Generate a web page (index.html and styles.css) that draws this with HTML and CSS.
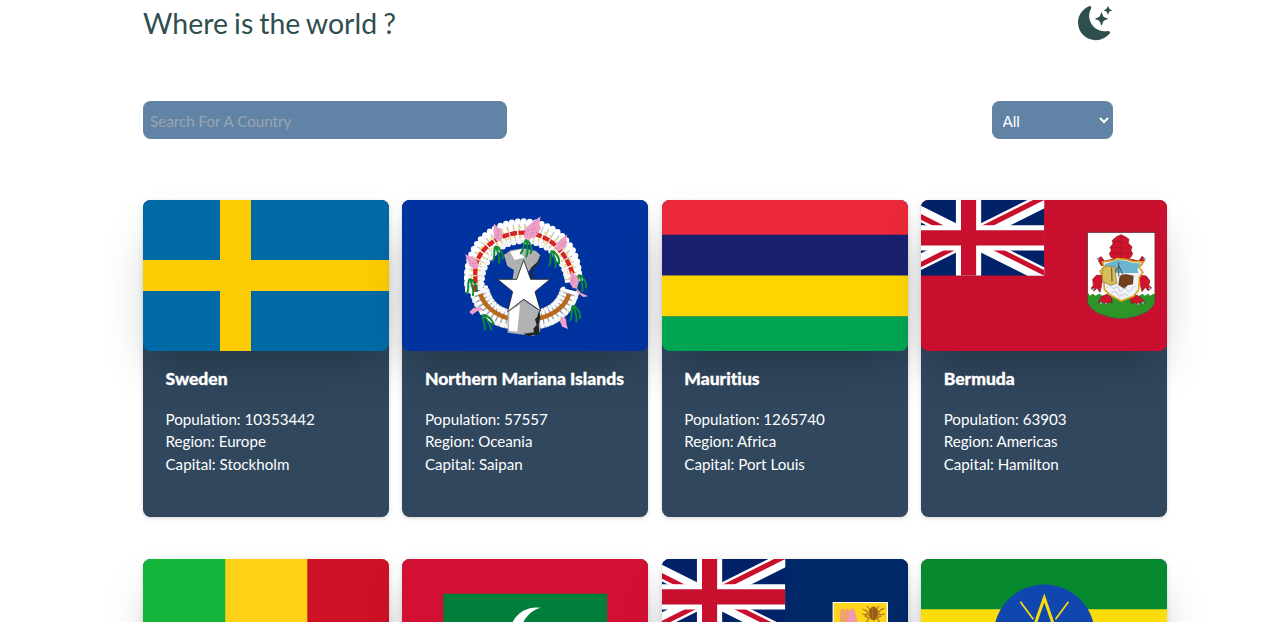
FILE: index.html
```html
<!DOCTYPE html>
<html lang="en">
<head>
<meta charset="utf-8">
<title>Where is the world ?</title>
<link rel="stylesheet" href="styles.css">
</head>
<body>
<svg class="defs" aria-hidden="true">
  <defs>
    <clipPath id="jack-diagonals"><path d="M30 15h30v15zv15H0zH0V0zV0h30z"/></clipPath>
    <g id="union-jack">
      <path d="M0 0h60v30H0z" fill="#012169"/>
      <path d="M0 0l60 30M60 0L0 30" stroke="#fff" stroke-width="6"/>
      <path d="M0 0l60 30M60 0L0 30" stroke="#c8102e" stroke-width="4" clip-path="url(#jack-diagonals)"/>
      <path d="M30 0v30M0 15h60" stroke="#fff" stroke-width="10"/>
      <path d="M30 0v30M0 15h60" stroke="#c8102e" stroke-width="6"/>
    </g>
    <clipPath id="canton"><path d="M0 0h123.3v75.7H0z"/></clipPath>
    <clipPath id="shield"><path d="M37 22H240V225C240 255 190 280 139 281C88 280 37 255 37 225Z"/></clipPath>
    <path id="orchid" d="M-4-34L4-20 12-15 14 5 5 22-6 20-13 5-10-13Z"/>
    <path id="leaves" d="M0 0C-8 14 2 28-7 42M4 0C4 18 16 24 11 48M8 2C18 14 24 20 22 36" fill="none" stroke="#0c8a34" stroke-width="6" stroke-linecap="round"/>
  </defs>
</svg>
<div class="page">
  <header class="header">
    <h1 class="title">Where is the world ?</h1>
    <svg class="moon" viewBox="0 0 16 16" fill="currentColor">
      <path d="M6 .278a.768.768 0 0 1 .08.858 7.208 7.208 0 0 0-.878 3.46c0 4.021 3.278 7.277 7.318 7.277.527 0 1.04-.055 1.533-.16a.787.787 0 0 1 .81.316.733.733 0 0 1-.031.893A8.349 8.349 0 0 1 8.344 16C3.734 16 0 12.286 0 7.71 0 4.266 2.114 1.312 5.124.06A.752.752 0 0 1 6 .278z"/>
      <path d="M10.794 3.148a.217.217 0 0 1 .412 0l.387 1.162c.173.518.579.924 1.097 1.097l1.162.387a.217.217 0 0 1 0 .412l-1.162.387a1.734 1.734 0 0 0-1.097 1.097l-.387 1.162a.217.217 0 0 1-.412 0l-.387-1.162A1.734 1.734 0 0 0 9.31 6.593l-1.162-.387a.217.217 0 0 1 0-.412l1.162-.387a1.734 1.734 0 0 0 1.097-1.097l.387-1.162zM13.863.099a.145.145 0 0 1 .274 0l.258.774c.115.346.386.617.732.732l.774.258a.145.145 0 0 1 0 .274l-.774.258a1.156 1.156 0 0 0-.732.732l-.258.774a.145.145 0 0 1-.274 0l-.258-.774a1.156 1.156 0 0 0-.732-.732l-.774-.258a.145.145 0 0 1 0-.274l.774-.258c.346-.115.617-.386.732-.732L13.863.1z"/>
    </svg>
  </header>
  <div class="filters">
    <input class="search" type="text" placeholder="Search For A Country">
    <select class="region"><option>All</option></select>
  </div>
  <main class="grid">
    <article class="card">
      <svg class="flag" viewBox="0 0 246 151.5" preserveAspectRatio="none">
        <path d="M0 0h246v152H0z" fill="#006aa7"/>
        <path d="M77 0h31v60h138v31H108v61H77V91H0V60h77z" fill="#fecc02"/>
      </svg>
      <div class="info"><h2 class="name">Sweden</h2><p>Population: 10353442</p><p>Region: Europe</p><p>Capital: Stockholm</p></div>
    </article>
    <article class="card">
      <svg class="flag" viewBox="0 0 246 151.5" preserveAspectRatio="none">
        <path d="M0 0h246v152H0z" fill="#0033a0"/>
        <g transform="translate(38) scale(.3333)" fill="none">
          <path d="M119 272C130 320 165 350 208 358M390 270C378 320 343 348 296 358" stroke="#9aa2ac" stroke-width="59"/>
          <path d="M119 272C130 320 165 350 208 358M390 270C378 320 343 348 296 358" stroke="#fff" stroke-width="56" stroke-dasharray="10 4"/>
          <path d="M94 276C110 340 150 370 204 378M412 278C396 336 350 370 298 378M138 262C148 308 176 332 208 335M370 266C358 308 328 330 300 334" stroke="#f4f5f8" stroke-width="13" stroke-linecap="round" stroke-dasharray="0 14"/>
          <path d="M103 272C84 160 165 94 250 94C325 94 390 140 402 245" stroke="#c5c8cf" stroke-width="54"/>
          <path d="M103 272C84 160 165 94 250 94C325 94 390 140 402 245" stroke="#fff" stroke-width="53" stroke-dasharray="12 4"/>
          <path d="M84 270C62 134 158 64 250 64C344 64 416 130 418 232" stroke="#fff" stroke-width="18" stroke-linecap="round" stroke-dasharray="0 18"/>
          <path d="M127 270C116 190 175 124 250 124C320 126 368 170 382 240" stroke="#f5f5f7" stroke-width="17" stroke-linecap="round" stroke-dasharray="0 17"/>
          <path d="M95 250C87 156 160 84 250 82C330 84 396 148 406 234M113 248C107 176 169 111 250 109C316 110 370 164 389 236" stroke="#f7dc55" stroke-width="6" stroke-linecap="round" stroke-dasharray="1 18"/>
          <path d="M106 275V205C114 145 178 98 250 98C318 98 374 145 398 222" stroke="#d6251f" stroke-width="13" stroke-dasharray="21 4"/>
          <path d="M121 282C133 318 165 344 206 355M387 282C378 318 343 344 298 355" stroke="#b9691c" stroke-width="14"/>
          <path d="M192 165L212 151 250 145 288 153 301 166 294 188 265 214V238H218L222 210 202 198Z" fill="#aeb0b2"/>
          <path d="M210 155L248 147 243 162 255 172 224 180Z" fill="#fff"/>
          <path d="M288 198L298 185 301 166 292 186 272 204V238L278 232V208Z" fill="#25282a"/>
          <path d="M203 334L251 299 300 334 301 395 280 408 203 398Z" fill="#b0b2b3"/>
          <path d="M208 334L240 314 232 395 207 392Z" fill="#fff"/>
          <path d="M298 328L292 350 285 358 290 375 280 386 282 397 250 401 265 409 299 402 296 375 301 352Z" fill="#202426"/>
          <path d="M251 180L272 238H330L285 275 302 333 251 298 203 335 218 275 173 238H230Z" fill="#fff" stroke="#222" stroke-width="2.5"/>
          <use href="#leaves" x="166" y="140"/><use href="#leaves" x="258" y="120" transform="rotate(12 258 120)"/><use href="#leaves" x="335" y="154"/><use href="#leaves" x="88" y="238"/><use href="#leaves" x="416" y="226"/><use href="#leaves" x="128" y="346" transform="rotate(-18 128 346)"/><use href="#leaves" x="398" y="318"/>
          <g fill="#eda0c7">
            <use href="#orchid" transform="translate(173 103) rotate(-12)"/>
            <use href="#orchid" transform="translate(276 91) rotate(38) scale(1.45)"/>
            <use href="#orchid" transform="translate(98 188) rotate(-35)"/>
            <use href="#orchid" transform="translate(364 133) rotate(36)"/>
            <use href="#orchid" transform="translate(402 244) rotate(-8)"/>
            <path d="M408 262L422 278 445 289 430 291 413 278ZM88 336L101 323 122 322 132 330 112 333 97 344ZM363 348L378 357 380 374 384 387 367 380 360 365Z"/>
          </g>
          <g stroke="#c5558e" stroke-width="2.5" stroke-dasharray="2 5">
            <path d="M169 80L178 120M179 88L168 120M258 94L292 84M262 103L292 97M285 63L273 110M84 173L108 204M91 190L112 190M354 145L380 119M347 125L374 139M400 220L397 260M410 230L393 242"/>
          </g>
        </g>
      </svg>
      <div class="info"><h2 class="name">Northern Mariana Islands</h2><p>Population: 57557</p><p>Region: Oceania</p><p>Capital: Saipan</p></div>
    </article>
    <article class="card">
      <svg class="flag" viewBox="0 0 246 151.5" preserveAspectRatio="none">
        <path d="M0 0h246v35H0z" fill="#ea2839"/>
        <path d="M0 34.7h246v41H0z" fill="#1a206d"/>
        <path d="M0 75.6h246v41H0z" fill="#ffd500"/>
        <path d="M0 116.4h246V152H0z" fill="#00a551"/>
      </svg>
      <div class="info"><h2 class="name">Mauritius</h2><p>Population: 1265740</p><p>Region: Africa</p><p>Capital: Port Louis</p></div>
    </article>
    <article class="card">
      <svg class="flag" viewBox="0 0 246 151.5" preserveAspectRatio="none">
        <path d="M0 0h246v152H0z" fill="#c8102e"/>
        <g clip-path="url(#canton)"><use href="#union-jack" transform="translate(-28.2) scale(2.525)"/></g>
        <g transform="translate(154 25) scale(.3333)">
          <g clip-path="url(#shield)">
            <path d="M37 22H240V285H37Z" fill="#fff"/>
            <path d="M30 210L40 205 45 212 53 206 62 212 72 206 83 212H193L202 206 210 212 219 206 226 212 235 206 245 212V285H30Z" fill="#2d9427"/>
          </g>
          <path d="M37 22H240V225C240 255 190 280 139 281C88 280 37 255 37 225Z" fill="none" stroke="#5b3438" stroke-width="2.5"/>
          <g fill="#cf142b" stroke="#831825" stroke-width="2">
            <path d="M125 35L138 29 151 35 162 43 160 55 171 65 168 76 173 86 168 96 155 104H123L108 97 103 86 109 76 105 67 114 57 112 46Z"/>
            <path d="M120 101L88 108 79 95 67 101 79 122 112 119ZM160 101L192 108 201 94 211 102 199 122 166 119Z"/>
            <path d="M84 150L64 151 53 163 55 181 48 190 57 198 66 189 75 202 80 180ZM194 150L214 153 225 168 221 180 230 189 219 197 211 187 201 200 196 179Z"/>
            <path d="M97 207L79 215 70 234 82 230 93 240 101 231 112 234 108 215ZM178 207L199 218 210 233 198 230 190 240 181 232 170 236 165 216Z"/>
          </g>
          <path d="M120 48L156 52M112 66L163 70M112 84L166 86M138 34V100" stroke="#831825" stroke-width="3" stroke-dasharray="4 5" fill="none"/>
          <path d="M82 111L112 107 126 101 153 103 171 109 205 111 192 126 204 142 193 157 191 195 175 214 139 228 107 211 88 194 86 157 75 139 88 126Z" fill="#eef1f8" stroke="#d9a520" stroke-width="5"/>
          <path d="M90 117L112 110 126 105 153 107 171 114 196 115 187 134 190 144H92L82 139 92 130Z" fill="#69b5cf"/>
          <path d="M82 130L98 122 120 127 125 175 108 181 82 169Z" fill="#d8bd55" stroke="#8a7430" stroke-width="2"/>
          <path d="M134 152L151 147 176 152 174 178 158 181 148 191 130 180Z" fill="#70401f"/>
          <path d="M131 112V154M120 141L132 123 144 151M110 128L111 170" stroke="#48514f" stroke-width="3" fill="none"/>
          <path d="M94 190L105 181 116 192 127 185 136 201 149 188 160 200 180 183M109 203L123 199 132 214 149 207 160 214" stroke="#b5b9c6" stroke-width="2" fill="none"/>
          <g fill="#86bddb"><circle cx="70" cy="103" r="3"/><circle cx="208" cy="103" r="3"/><circle cx="55" cy="192" r="3"/><circle cx="224" cy="190" r="3"/><circle cx="78" cy="234" r="3"/><circle cx="93" cy="236" r="3"/><circle cx="190" cy="237" r="3"/><circle cx="204" cy="233" r="3"/></g>
        </g>
      </svg>
      <div class="info"><h2 class="name">Bermuda</h2><p>Population: 63903</p><p>Region: Americas</p><p>Capital: Hamilton</p></div>
    </article>
    <article class="card">
      <svg class="flag" viewBox="0 0 246 151.5" preserveAspectRatio="none">
        <path d="M0 0h246v152H0z" fill="#14b53a"/><path d="M82.3 0H246v152H82.3z" fill="#fcd116"/><path d="M164.3 0H246v152h-81.7z" fill="#ce1126"/>
      </svg>
    </article>
    <article class="card">
      <svg class="flag" viewBox="0 0 246 151.5" preserveAspectRatio="none">
        <path d="M0 0h246v152H0z" fill="#d21034"/><path d="M41.3 34.7h164v82h-164z" fill="#007e3a"/>
        <path d="M138.5 48.8A27 27 0 1 0 138.5 102.2A27.8 27.8 0 0 1 138.5 48.8Z" fill="#fff"/>
      </svg>
    </article>
    <article class="card">
      <svg class="flag" viewBox="0 0 246 151.5" preserveAspectRatio="none">
        <path d="M0 0h246v152H0z" fill="#002868"/>
        <g clip-path="url(#canton)"><use href="#union-jack" transform="translate(-28.2) scale(2.525)"/></g>
        <path d="M171.2 43.5h54.2v40c0 12-14 20-27.1 25-13-5-27.1-13-27.1-25z" fill="#ffd41c" stroke="#fff" stroke-width="1.2"/>
        <path d="M178.5 64l-.8-9 1.5-5.5 3.5 1.5 3-1.5 2 3 2-4 3 2.5 1.5 6 1.5 7z" fill="#f4a06c"/>
        <path d="M185 64l2-10 2-4 3 2 1.5 6 2 6z" fill="#f29ab5"/>
        <path d="M201 50l5 3-3 4 4 2-3 5M222 49l-6 4 3 4-4 2 3 5M200 55l7 1M223 55l-7 1M205 47l3 4M217 47l-3 4" fill="none" stroke="#a9771b" stroke-width="1.2"/>
        <ellipse cx="211.5" cy="54.5" rx="5" ry="7" fill="#b1731d"/><path d="M209 50v9M212 48v13M214 50v8" stroke="#6e3c12" stroke-width=".8"/>
      </svg>
    </article>
    <article class="card">
      <svg class="flag" viewBox="0 0 246 151.5" preserveAspectRatio="none">
        <path d="M0 0h246v51H0z" fill="#078930"/><path d="M0 50.3h246v51H0z" fill="#fcdd09"/><path d="M0 101h246v51H0z" fill="#da121a"/>
        <circle cx="123.3" cy="76" r="50.6" fill="#0f47af"/>
        <g fill="none" stroke="#fcdd09" stroke-width="3"><path d="M123.3 39L99 108 158 66H88L147 108Z"/><path stroke-width="1.7" d="M99.3 42.8L112.3 60.3M147.5 42.8L134.5 60.3"/></g>
      </svg>
    </article>
  </main>
</div>
</body>
</html>
```
FILE: styles.css
```css
* { box-sizing: border-box; margin: 0; padding: 0; }
body {
  background: #fff;
  font-family: Lato, sans-serif;
  font-size: 15.17px;
  line-height: 22.75px;
  font-variant-ligatures: none;
}
.defs { position: absolute; width: 0; height: 0; }
.page { height: 622px; padding-left: 143px; overflow: hidden; }
.header {
  display: flex;
  justify-content: space-between;
  align-items: center;
  width: 969.5px;
  height: 47px;
  color: #2f4f4f;
}
.title { font-size: 28.44px; font-weight: 400; line-height: 45px; word-spacing: -1.2px; }
.moon { display: block; width: 34.2px; height: 34.2px; }
.filters {
  display: flex;
  justify-content: space-between;
  width: 969.5px;
  margin-top: 54.3px;
}
.search, .region {
  height: 38px;
  border: 0;
  border-radius: 7.6px;
  background: #6184a6;
  color: #fff;
  font: inherit;
  outline: 0;
}
.search { width: 364px; padding: 1px 7px 0; }
.search::placeholder { color: #9ca3af; opacity: 1; }
.region { width: 121px; padding: 1px 0 0 7px; border-right: 1px solid transparent; }
.grid {
  display: grid;
  grid-template-columns: repeat(4, 246px);
  column-gap: 13.4px;
  row-gap: 41.7px;
  margin-top: 60.4px;
}
.card {
  height: 317.8px;
  border-radius: 7.6px;
  background: #30475e;
  color: #fff;
  box-shadow: 0 1px 3px rgba(0, 0, 0, .1), 0 2px 6px rgba(0, 0, 0, .07);
}
.flag {
  display: block;
  width: 100%;
  height: 151.5px;
  border-radius: 7.6px;
  box-shadow: 0 23.7px 47.4px -11.4px rgba(0, 0, 0, .25);
}
.info { padding: 14.6px 22.5px; }
.name {
  margin-bottom: 15.9px;
  font-size: 17.5px;
  font-weight: 900;
  line-height: 26px;
  white-space: nowrap;
  -webkit-text-stroke: .3px #fff;
}
```
